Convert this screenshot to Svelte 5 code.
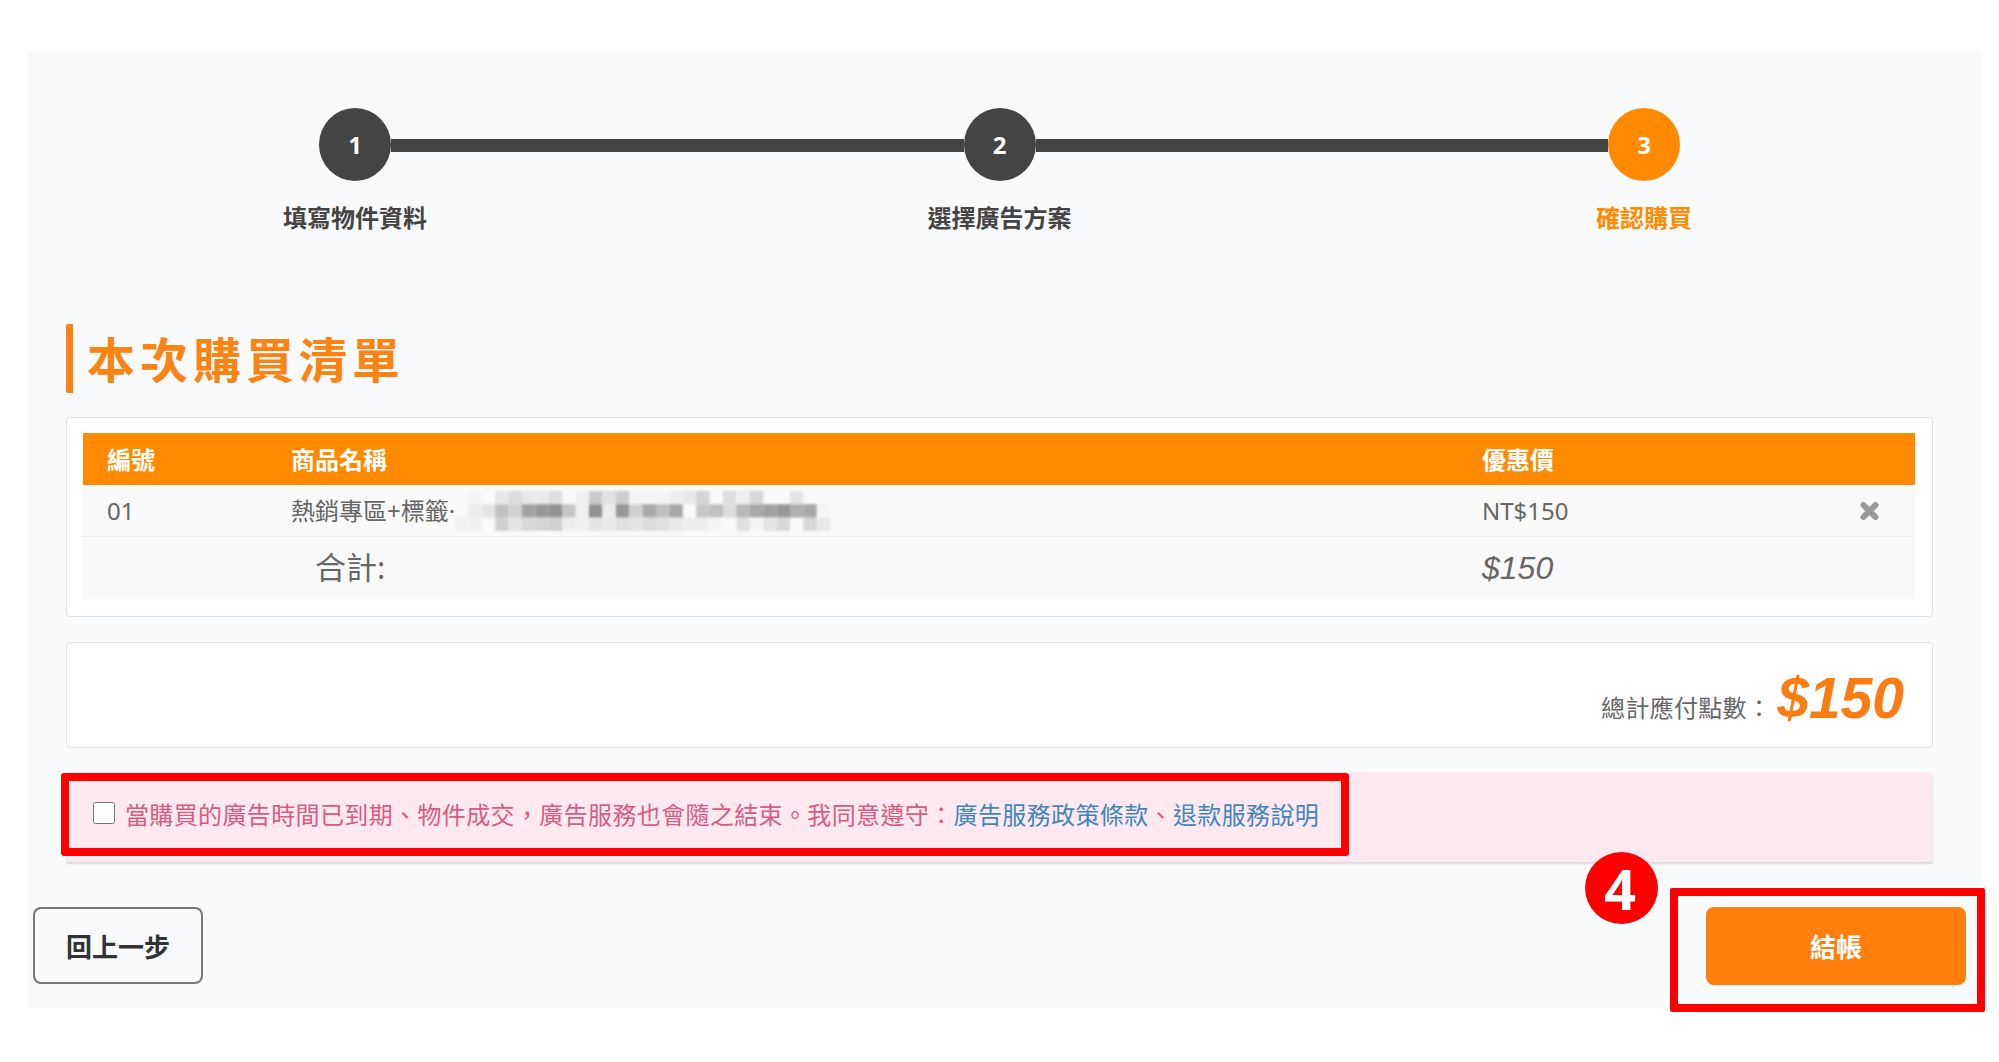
<script>
	const steps = [
		{ n: 1, label: '填寫物件資料' },
		{ n: 2, label: '選擇廣告方案' },
		{ n: 3, label: '確認購買', active: true }
	];

	// pixelated product name, one row per list, gray level per cell (0 = no cell)
	const mosaic = [
		[0, 0xf4, 0, 0xe6, 0xdc, 0xe8, 0xea, 0xde, 0, 0xf0, 0xca, 0xe0, 0xcc, 0xf4, 0xf4, 0xf4, 0xee, 0xe8, 0xd4, 0, 0xdd, 0xee, 0xd8, 0, 0, 0xe4, 0, 0],
		[0, 0xec, 0xe4, 0xc0, 0xd0, 0xa2, 0x98, 0x92, 0xc6, 0xf0, 0x92, 0xec, 0x98, 0xd0, 0xa8, 0xc0, 0xa8, 0, 0xc8, 0xc0, 0xdc, 0xb8, 0xa8, 0xa0, 0x98, 0xb0, 0xa8, 0xf6],
		[0xf0, 0xf0, 0, 0xd0, 0xe4, 0xd8, 0xd4, 0xd0, 0xee, 0xf0, 0xe4, 0xe8, 0xe0, 0xe4, 0xdc, 0xe0, 0xe8, 0xee, 0xee, 0xf4, 0, 0xe0, 0xf4, 0xe4, 0xd8, 0, 0xd8, 0xe8]
	];
	const cell = 13.4;

	function gray(v) {
		return `rgb(${v},${v},${v})`;
	}
</script>

<div class="page">
	<div class="panel">
		<ol class="steps">
			{#each steps as step, i}
				{#if i > 0}
					<li class="steps__line" style="grid-column: {i * 2}"></li>
				{/if}
				<li class="steps__dot" class:is-active={step.active} style="grid-column: {i * 2 + 1}">{step.n}</li>
				<li class="steps__label" class:is-active={step.active} style="grid-column: {i * 2 + 1}">{step.label}</li>
			{/each}
		</ol>

		<div class="section">
			<h2 class="title">本次購買清單</h2>

			<div class="card card--list">
				<table class="list">
					<colgroup>
						<col style="width: 184px" />
						<col style="width: 1191px" />
						<col style="width: 381px" />
						<col style="width: 76px" />
					</colgroup>
					<thead>
						<tr>
							<th>編號</th>
							<th>商品名稱</th>
							<th>優惠價</th>
							<th></th>
						</tr>
					</thead>
					<tbody>
						<tr class="list__item">
							<td>01</td>
							<td>
								<span class="list__name">熱銷專區+標籤·</span><svg class="mosaic" width="376" height="40" viewBox="0 0 376 40" aria-hidden="true">
									{#each mosaic as row, y}
										{#each row as v, x}
											{#if v}
												<rect x={x * cell} y={y * 13.3} width={cell} height="13.3" fill={gray(v)} />
											{/if}
										{/each}
									{/each}
								</svg>
							</td>
							<td>NT$150</td>
							<td class="list__remove">
								<svg width="19" height="18" viewBox="0 0 19 18" aria-hidden="true">
									<path d="M3.5 3 15.5 15M15.5 3 3.5 15" stroke="#999" stroke-width="6" stroke-linecap="round" fill="none" />
								</svg>
							</td>
						</tr>
						<tr class="list__total">
							<td></td>
							<td class="list__total-label">合計:</td>
							<td class="list__total-value">$150</td>
							<td></td>
						</tr>
					</tbody>
				</table>
			</div>

			<div class="card card--sum">
				<span class="sum__label">總計應付點數：</span>
				<span class="sum__value">$150</span>
			</div>

			<div class="notice">
				<label class="notice__mark">
					<input type="checkbox" class="notice__check" />
					<span>當購買的廣告時間已到期、物件成交，廣告服務也會隨之結束。我同意遵守：<a href="#terms">廣告服務政策條款</a>、<a href="#refund">退款服務說明</a></span>
				</label>
			</div>
		</div>

		<div class="actions">
			<button class="btn btn--back">回上一步</button>
			<div class="actions__mark">
				<span class="badge">4</span>
				<button class="btn btn--pay">結帳</button>
			</div>
		</div>
	</div>
</div>

<style>
	:global(body) {
		background: #fff;
		font-family: 'Noto Sans', 'Noto Sans CJK TC', sans-serif;
	}

	.page {
		box-sizing: border-box;
		padding: 51px 0 0 28px;
		height: 1062px;
	}

	.panel {
		box-sizing: border-box;
		padding-top: 57px;
		width: 1953px;
		height: 957px;
		background: #f9fafc;
	}

	.steps {
		display: grid;
		grid-template-columns: 72px 1fr 72px 1fr 72px;
		grid-template-rows: 73px auto;
		row-gap: 20px;
		margin: 0 0 0 291px;
		padding: 0;
		width: 1361px;
		list-style: none;
	}

	.steps__dot {
		grid-row: 1;
		display: flex;
		align-items: center;
		justify-content: center;
		border-radius: 50%;
		background: #444;
		color: #fff;
		font-size: 24px;
		font-weight: 700;
	}

	.steps__dot.is-active {
		background: #ff8a00;
	}

	.steps__line {
		grid-row: 1;
		align-self: center;
		margin-top: 1px;
		height: 13px;
		background: #444;
	}

	.steps__label {
		grid-row: 2;
		justify-self: center;
		color: #444;
		font-size: 24px;
		font-weight: 700;
		line-height: 34px;
		white-space: nowrap;
	}

	.steps__label.is-active {
		color: #ff8a00;
	}

	.section {
		margin: 0 48px 0 38px;
	}

	.title {
		display: flex;
		align-items: center;
		box-sizing: border-box;
		margin: 89px 0 0;
		padding: 0 0 4px 14px;
		height: 69px;
		border-left: 7px solid #fb8312;
		border-radius: 2px;
		color: #fb8312;
		font-size: 48px;
		font-weight: 700;
		letter-spacing: 5px;
	}

	.card {
		box-sizing: border-box;
		border: 1px solid #e0e1e3;
		border-radius: 4px;
		background: #fff;
	}

	.card--list {
		margin-top: 24px;
		padding: 15px 17px 17px 16px;
		height: 200px;
	}

	.list {
		width: 1832px;
		border-collapse: collapse;
		table-layout: fixed;
		color: #666;
		font-size: 24px;
	}

	.list th {
		padding: 0 0 2px 24px;
		height: 50px;
		background: #ff8a00;
		color: #fff;
		font-weight: 700;
		text-align: left;
	}

	.list td {
		padding: 0 0 0 24px;
		background: #f9f9f9;
		white-space: nowrap;
	}

	.list__item td {
		height: 51px;
		border-bottom: 1px solid #eeeef0;
		line-height: 1;
	}

	.list__name {
		vertical-align: middle;
	}

	.mosaic {
		display: inline-block;
		vertical-align: middle;
		filter: blur(1px);
	}

	.list__remove svg {
		display: block;
	}

	.list td.list__remove {
		padding-left: 21px;
	}

	.list__total td {
		height: 60px;
		line-height: 1;
	}

	.list td.list__total-label {
		padding: 0 0 2px 48px;
		font-size: 31px;
	}

	.list__total-value {
		font-family: 'Liberation Sans', sans-serif;
		font-size: 32px;
		font-style: italic;
	}

	.card--sum {
		display: flex;
		align-items: center;
		justify-content: flex-end;
		gap: 6px;
		margin-top: 25px;
		padding-right: 28px;
		height: 106px;
		color: #666;
	}

	.sum__label {
		margin-top: 22px;
		font-size: 24px;
		letter-spacing: 0.3px;
	}

	.sum__value {
		margin-top: 5px;
		color: #fb7d12;
		font-family: 'Liberation Sans', sans-serif;
		font-size: 57px;
		font-style: italic;
		font-weight: 700;
	}

	.notice {
		display: flex;
		margin-top: 24px;
		height: 90px;
		border-radius: 2px;
		background: #ffe9f0;
		box-shadow: 0 2px 2px rgba(0, 0, 0, 0.13);
	}

	.notice__mark {
		display: flex;
		align-items: center;
		gap: 10px;
		box-sizing: border-box;
		margin: 1px 0 0 -5px;
		padding: 0 22px 3px 24px;
		height: 83px;
		border: 8px solid #f00;
		border-radius: 3px;
		color: #d65c82;
		font-size: 24px;
		letter-spacing: 0.37px;
		white-space: nowrap;
	}

	.notice__mark a {
		color: #3f86bd;
		text-decoration: none;
	}

	.notice__check {
		flex: none;
		margin: 0;
		width: 22px;
		height: 22px;
	}

	.actions {
		display: flex;
		align-items: flex-start;
		justify-content: space-between;
		margin: 26px -4px 0 5px;
	}

	.btn {
		height: 77px;
		border-radius: 8px;
		font-family: inherit;
		font-size: 26px;
		font-weight: 700;
		cursor: pointer;
	}

	.btn--back {
		margin-top: 19px;
		width: 170px;
		border: 2px solid #777;
		background: transparent;
		color: #333;
	}

	.actions__mark {
		position: relative;
		box-sizing: border-box;
		padding: 11px 11px 19px 28px;
		width: 315px;
		height: 124px;
		border: 8px solid #f00;
		border-radius: 2px;
	}

	.btn--pay {
		display: block;
		width: 260px;
		height: 78px;
		border: none;
		background: #ff7f0e;
		color: #fff;
	}

	.badge {
		position: absolute;
		top: -44px;
		left: -93px;
		display: flex;
		align-items: center;
		justify-content: center;
		box-sizing: border-box;
		padding-right: 3px;
		width: 73px;
		height: 72px;
		border-radius: 50%;
		background: #f00;
		color: #fff;
		font-size: 56px;
		font-weight: 700;
	}
</style>
